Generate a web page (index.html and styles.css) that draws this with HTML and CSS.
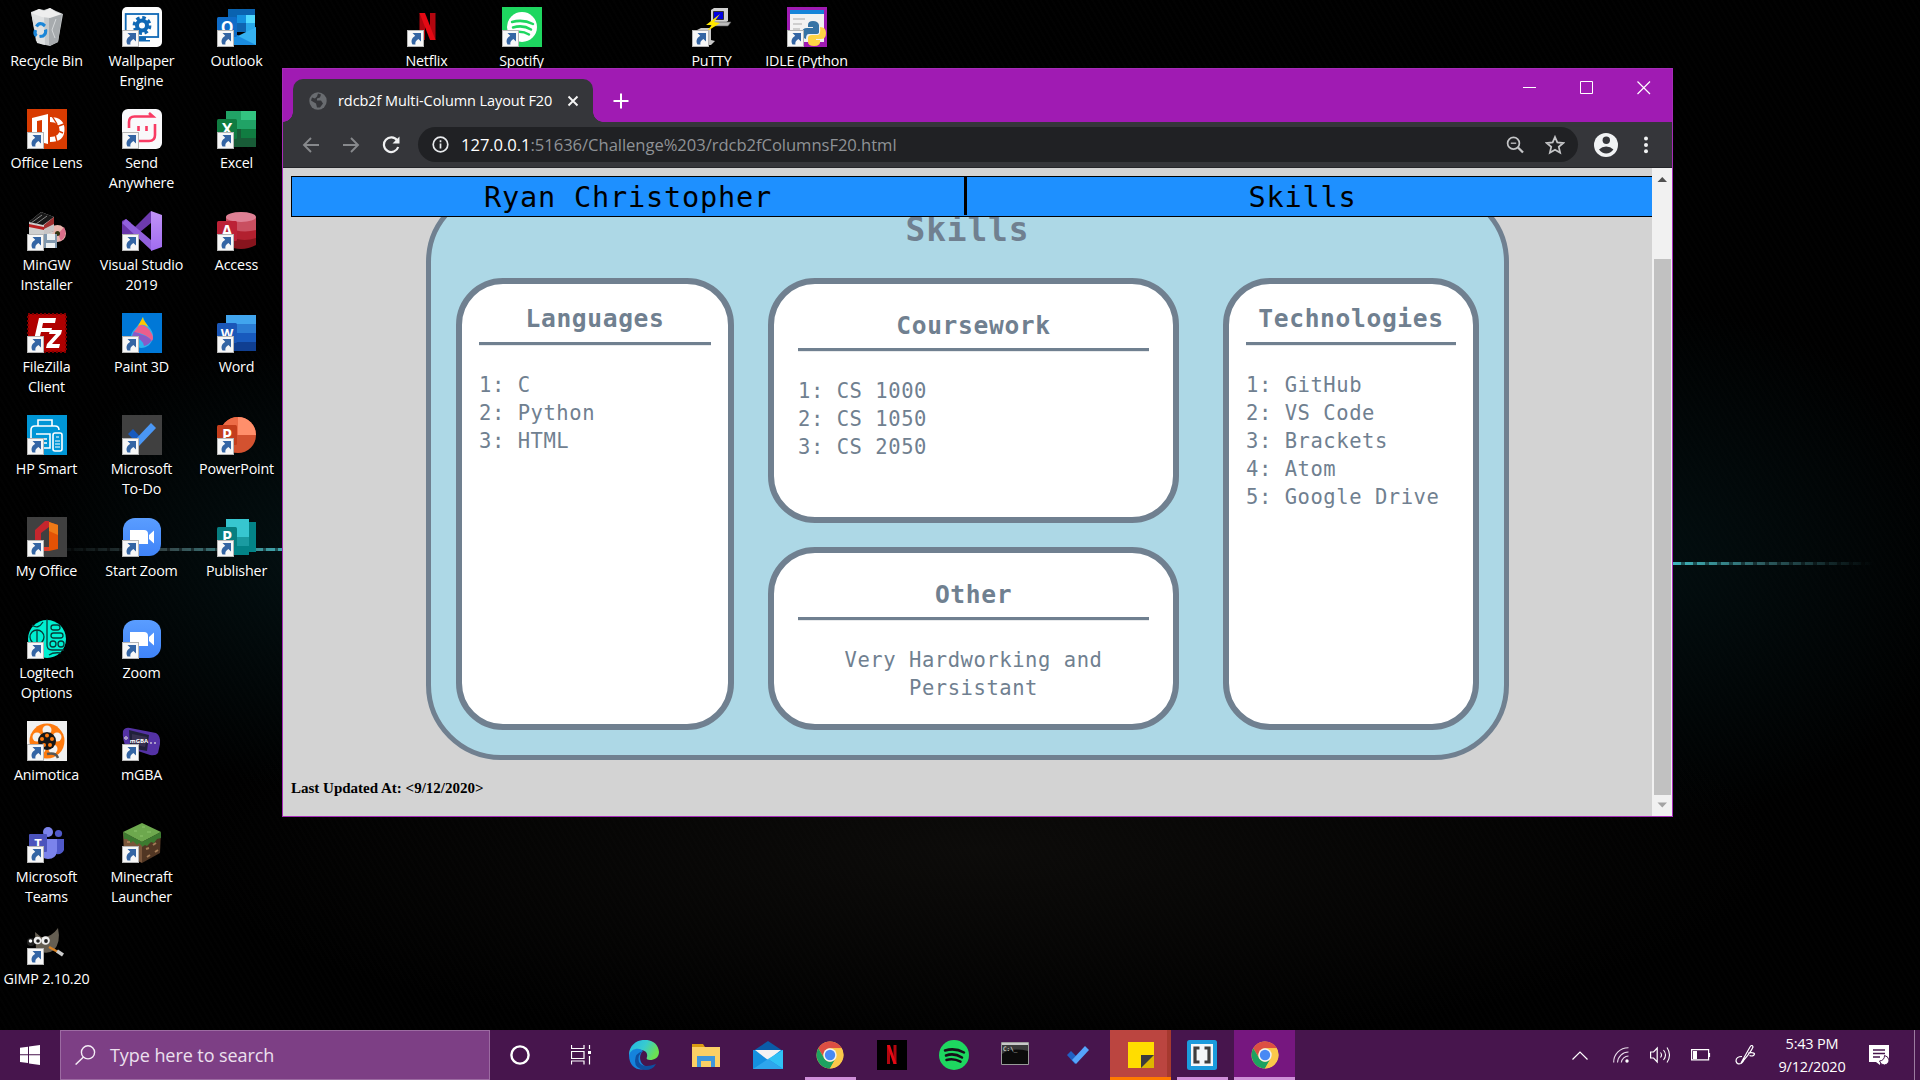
FILE: index.html
```html
<!DOCTYPE html>
<html lang="en">
<head>
<meta charset="utf-8">
<title>Desktop</title>
<link rel="stylesheet" href="styles.css">
</head>
<body>
<svg class="defs" width="0" height="0" aria-hidden="true">
  <defs>
    <symbol id="shortcut" viewBox="0 0 17 17">
      <rect x=".5" y=".5" width="16" height="16" fill="#f7f7f7" stroke="#b5b5b5"/>
      <path d="M5.500 3h8.500v8.500l-2.600-2.500C9 10.500 7.800 12.500 8.500 14.500H5.500C3.500 11 4.800 8 8.200 5.700z" fill="#3465a4"/>
    </symbol>
    <symbol id="chrome" viewBox="0 0 28 28">
      <circle cx="14" cy="14" r="13.500" fill="#fbc84a"/>
      <path d="M2.300 7.300A13.500 13.500 0 0 1 25.700 7.300H14a6.700 6.700 0 0 0-5.800 10z" fill="#dd4f43"/>
      <path d="M2.300 7.300L8.200 17.300A6.700 6.700 0 0 0 19.800 17.300L14 27.500A13.500 13.500 0 0 1 2.300 7.300z" fill="#1da260"/>
      <path d="M14 7.300H25.700A13.500 13.500 0 0 1 14 27.500l5.800-10.200A6.700 6.700 0 0 0 14 7.300z" fill="#fbc84a"/>
      <circle cx="14" cy="14" r="6.700" fill="#f1f1f1"/><circle cx="14" cy="14" r="5.200" fill="#4889f4"/>
    </symbol>
    <symbol id="zoomapp" viewBox="0 0 40 40">
      <linearGradient id="zg" x2="0" y2="1"><stop stop-color="#5a9dff"/><stop offset="1" stop-color="#3f83f8"/></linearGradient>
      <rect x="1" y="1" width="38" height="38" rx="12" fill="url(#zg)"/>
      <path d="M8 13h14q4 0 4 4v10H12q-4 0-4-4zM27 18l5-4.500v13L27 22z" fill="#fff"/>
    </symbol>
    <linearGradient id="edgeA" x1="0" y1="0" x2="1" y2=".4"><stop stop-color="#1fb5e8"/><stop offset=".55" stop-color="#38cbd0"/><stop offset="1" stop-color="#6be052"/></linearGradient>
    <linearGradient id="vs" x2="0" y2="1"><stop stop-color="#c193f7"/><stop offset="1" stop-color="#a06cf0"/></linearGradient>
  </defs>
</svg>

<main class="desktop">
  <div class="beam beam-left"></div>
  <div class="beam beam-right"></div>

  <section class="icons">
    <div class="app c1 r1">
      <svg viewBox="0 0 40 40"><path d="M4 5l8-3 5 1 6-2 6 3 7 3-5 28-8 4-9-2-5-3z" fill="#c6c9cb"/><path d="M4 5l13 4 1 29-8-2z" fill="#dfe1e2"/><path d="M22 9l13-2-4 28-9 4z" fill="#a7abae"/><path d="M4 6l8-4 5 2 6-3 6 4 6 2-12 4-8-1z" fill="#eee"/><path d="M29 12l-4 11 3 8M6 12l5 10" stroke="#d4d7d9" fill="none"/><path d="M9.500 19.500q2-4 6-2.500l2.500 2M18.500 22.500q1 4-2.500 6.500l-3.500 .5M9.500 29q-2.500-2-1-6" stroke="#1b86d8" stroke-width="3.200" fill="none"/></svg>
      <span>Recycle Bin</span></div>
    <div class="app c2 r1">
      <svg viewBox="0 0 40 40"><rect width="40" height="40" rx="5" fill="#fdfdfd"/><rect x="3.700" y="7" width="32.500" height="23" fill="none" stroke="#0f68b5" stroke-width="1.800"/><path d="M17 30h7v3h4v1.500H13V33h4z" fill="#0f68b5"/><circle cx="20" cy="18.500" r="5" fill="none" stroke="#0f68b5" stroke-width="4"/><circle cx="20" cy="18.500" r="7.800" fill="none" stroke="#0f68b5" stroke-width="3.200" stroke-dasharray="3.500 2.626"/></svg>
      <svg class="link"><use href="#shortcut"/></svg><span>Wallpaper<br>Engine</span></div>
    <div class="app c3 r1">
      <svg viewBox="0 0 40 40"><path d="M11 2h27v20H11z" fill="#0a63b0"/><path d="M20 8h9v8h-9z" fill="#1490df"/><path d="M29 8h9v8h-9z" fill="#50d9ff"/><path d="M20 16h9v9h-9z" fill="#0f64b0"/><path d="M29 16h9v9h-9z" fill="#28a8ea"/><path d="M9 38V24l14 5 16-9v18z" fill="#1a8ce0"/><path d="M39 20v18L21 29z" fill="#35b1f1"/><rect y="10" width="20" height="20" rx="1.500" fill="#0f6cc8"/><text x="10" y="26" class="glyph g17">O</text></svg>
      <svg class="link"><use href="#shortcut"/></svg><span>Outlook</span></div>

    <div class="app c1 r2">
      <svg viewBox="0 0 40 40"><path fill="#d83b01" d="M0 0h40v40H0z"/><path fill="#fff" d="M5 9l16-4v30L5 31z"/><path fill="#d83b01" d="M10 12l5-1v18l-5-1z"/><path d="M23 10.500q12 0 12 10t-12 10" fill="none" stroke="#fff" stroke-width="5"/><path d="M25 7l5 8M37 15l-8 3M36 24l-7-3M30 33l-2-8" stroke="#d83b01" stroke-width="1.400"/></svg>
      <svg class="link"><use href="#shortcut"/></svg><span>Office Lens</span></div>
    <div class="app c2 r2">
      <svg viewBox="0 0 40 40"><rect width="40" height="40" rx="6" fill="#f9f9fb"/><path d="M7 19v-6q0-5.500 5.500-5.500H31l-4-3.500M33 15v11q0 6-6 6H14q-6 0-7-5" stroke="#f83a63" stroke-width="2.600" fill="none"/><path d="M16.500 17v5M24.500 17v5" stroke="#f83a63" stroke-width="2.600"/></svg>
      <svg class="link"><use href="#shortcut"/></svg><span>Send<br>Anywhere</span></div>
    <div class="app c3 r2">
      <svg viewBox="0 0 40 40"><path d="M9 2h15v18H9z" fill="#21a366"/><path d="M24 2h15v9H24z" fill="#33c481"/><path d="M24 11h15v9H24z" fill="#21a366"/><path d="M24 20h15v9H24z" fill="#107c41"/><path d="M9 20h15v9h15v9H9z" fill="#185c37"/><rect y="10" width="20" height="20" rx="1.500" fill="#107c41"/><text x="10" y="26" class="glyph g17">X</text></svg>
      <svg class="link"><use href="#shortcut"/></svg><span>Excel</span></div>

    <div class="app c1 r3">
      <svg viewBox="0 0 40 40"><circle cx="30.500" cy="22.500" r="8.500" fill="#e9b5ac"/><path d="M31 23l6-7q4 8-3 14z" fill="#db6f8b"/><circle cx="30.500" cy="22.500" r="2.500" fill="#331"/><path d="M2 11L14 1l13 5v15L17 29 2 24z" fill="#cfcfcf"/><path d="M2 11L14 1l13 5-11 8z" fill="#181818"/><path d="M4 12L15 4M9 13L20 5" stroke="#888"/><path d="M17 14l10-8v14l-10 3z" fill="#a03030"/><path d="M17 18l10-5v7l-10 4z" fill="#c8c4c4"/><path d="M2 13l15 3v3L2 16z" fill="#b81e20"/><path d="M17 23h13v14H16z" fill="#8198ae"/><path d="M20 23h8v6h-8zM19 32h9v5h-9z" fill="#ecf0f2"/></svg>
      <svg class="link"><use href="#shortcut"/></svg><span>MinGW<br>Installer</span></div>
    <div class="app c2 r3">
      <svg viewBox="0 0 40 40"><path d="M0 10l4-2 5 4v16L0 32z" fill="#6935a9"/><path d="M3 9L29 0v9L9 31z" fill="#000" opacity="0"/><path d="M29 0v12L6 31l-5-3z" fill="#6d3aaf"/><path d="M4 8l25 21v10L0 12z" fill="#9160dc"/><path d="M29 0l11 4v32l-11 4z" fill="url(#vs)"/></svg>
      <svg class="link"><use href="#shortcut"/></svg><span>Visual Studio<br>2019</span></div>
    <div class="app c3 r3">
      <svg viewBox="0 0 40 40"><path d="M9 6v28q15 8 30 0V6z" fill="#87141d"/><path d="M9 6v18q15 8 30 3V6z" fill="#b2202f"/><path d="M9 6v10q15 7 30 3V6z" fill="#c94f60"/><ellipse cx="24" cy="6" rx="15" ry="5" fill="#df8094"/><rect y="10" width="20" height="20" rx="1.500" fill="#bc2136"/><text x="10" y="26" class="glyph g17">A</text></svg>
      <svg class="link"><use href="#shortcut"/></svg><span>Access</span></div>

    <div class="app c1 r4">
      <svg viewBox="0 0 40 40"><path fill="#b00000" d="M1 1h38v38H1z"/><rect x="1" y="1" width="38" height="38" fill="none" stroke="#7d0000" stroke-width="2" stroke-dasharray="2 2"/><path d="M12 5h17l-1 5H16l-1 5h10l-1 4H14l-3 12H6zM23 17h12l-1 4-9 10h8l-1 4H19l1-4 9-10h-7z" fill="#fff"/></svg>
      <svg class="link"><use href="#shortcut"/></svg><span>FileZilla<br>Client</span></div>
    <div class="app c2 r4">
      <svg viewBox="0 0 40 40"><path fill="#0078d7" d="M0 0h40v40H0z"/><path d="M21 4c2 8 11 12 10 20-1 7-6 11-12 11-6-1-10-6-10-12 1-7 9-10 12-19z" fill="#2bb3ef"/><path d="M12 18q5 3 12 5l6 4q-3 5-8 6-1-7-12-10z" fill="#885ac7"/><path d="M17 12q8-1 13 9 2 4 0 7-5-7-18-9z" fill="#eb5e8c"/><path d="M21 4c0 4 4 6 5 10q-5-4-10-1z" fill="#ffc600"/></svg>
      <svg class="link"><use href="#shortcut"/></svg><span>Paint 3D</span></div>
    <div class="app c3 r4">
      <svg viewBox="0 0 40 40"><path d="M9 2h30v9H9z" fill="#41a5ee"/><path d="M9 11h30v9H9z" fill="#2b7cd3"/><path d="M9 20h30v9H9z" fill="#185abd"/><path d="M9 29h30v9H9z" fill="#103f91"/><rect y="10" width="20" height="20" rx="1.500" fill="#1b57b8"/><text x="10" y="25" class="glyph g14">W</text></svg>
      <svg class="link"><use href="#shortcut"/></svg><span>Word</span></div>

    <div class="app c1 r5">
      <svg viewBox="0 0 40 40"><path fill="#0096d6" d="M0 0h40v40H0z"/><path d="M4 27V15q0-4 4-4h20q4 0 4 4M11 11V5h14v6M9 19h14v14H9M12 24h8M12 28h8" fill="none" stroke="#fff" stroke-width="1.600"/><rect x="26" y="18" width="9" height="18" rx="2" fill="#0096d6" stroke="#fff" stroke-width="1.600"/><path d="M29 22h3M28 26h5M28 29h5M28 32h5" stroke="#fff"/></svg>
      <svg class="link"><use href="#shortcut"/></svg><span>HP Smart</span></div>
    <div class="app c2 r5">
      <svg viewBox="0 0 40 40"><path fill="#404040" d="M0 0h40v40H0z"/><path d="M6 19l5-5 10 11-4 5z" fill="#185abd"/><path d="M29 8l5 5-17 18-5-5z" fill="#4a97f5"/></svg>
      <svg class="link"><use href="#shortcut"/></svg><span>Microsoft<br>To-Do</span></div>
    <div class="app c3 r5">
      <svg viewBox="0 0 40 40"><circle cx="21" cy="20" r="18" fill="#d35230"/><path d="M21 2a18 18 0 0 0-18 18h18z" fill="#ed6c47"/><path d="M21 2a18 18 0 0 1 18 18H21z" fill="#ff8f6b"/><rect y="10" width="20" height="20" rx="1.500" fill="#c43e1c"/><text x="10" y="26" class="glyph g17">P</text></svg>
      <svg class="link"><use href="#shortcut"/></svg><span>PowerPoint</span></div>

    <div class="app c1 r6">
      <svg viewBox="0 0 40 40"><path fill="#404040" d="M0 0h40v40H0z"/><path d="M8 28V13l10-9h4v6l-8 6v14h8v4h-4z" fill="#c5262d"/><path d="M22 5l9 3v24l-9 2z" fill="#e35205"/><path d="M22 5l9 3v10l-9-4z" fill="#ee7a17"/><path d="M8 28l6-3v5h8v4h-5z" fill="#e03a2b"/></svg>
      <svg class="link"><use href="#shortcut"/></svg><span>My Office</span></div>
    <div class="app c2 r6"><svg viewBox="0 0 40 40"><use href="#zoomapp"/></svg>
      <svg class="link"><use href="#shortcut"/></svg><span>Start Zoom</span></div>
    <div class="app c3 r6">
      <svg viewBox="0 0 40 40"><path d="M24 5h15v30H24z" fill="#038387"/><path d="M9 2h23v18H9z" fill="#37c6d0"/><path d="M9 20h23v9H9z" fill="#1a9ba1"/><path d="M9 29h23v9H9z" fill="#038387"/><rect y="10" width="20" height="20" rx="1.500" fill="#077e80"/><text x="10" y="26" class="glyph g17">P</text></svg>
      <svg class="link"><use href="#shortcut"/></svg><span>Publisher</span></div>

    <div class="app c1 r7">
      <svg viewBox="0 0 40 40"><circle cx="20" cy="20" r="19" fill="#00efd1"/><g fill="none" stroke="#073b38" stroke-width="1.300"><circle cx="10" cy="18" r="7"/><path d="M10 11v13M20 0v26q0 5 5 5h12M5 6q6 5 11-3M22 36q4-3 12-2"/><rect x="24" y="6" width="9" height="5" rx="2.500"/><rect x="24" y="14" width="12" height="5" rx="2.500"/><circle cx="26" cy="25" r="3"/><circle cx="34" cy="25" r="3"/></g></svg>
      <svg class="link"><use href="#shortcut"/></svg><span>Logitech<br>Options</span></div>
    <div class="app c2 r7"><svg viewBox="0 0 40 40"><use href="#zoomapp"/></svg>
      <svg class="link"><use href="#shortcut"/></svg><span>Zoom</span></div>

    <div class="app c1 r8">
      <svg viewBox="0 0 40 40"><path fill="#f1f1f1" d="M0 0h40v40H0z"/><circle cx="20" cy="20" r="17.500" fill="#ff7b0f"/><g fill="#f1f1f1"><circle cx="20" cy="9" r="4.500"/><circle cx="10" cy="16" r="4.500"/><circle cx="30" cy="16" r="4.500"/><circle cx="26" cy="28" r="4.500"/><circle cx="14" cy="28" r="4.500"/></g><circle cx="20" cy="20" r="9" fill="#171717"/><g fill="#ff7b0f"><circle cx="20" cy="14.500" r="2"/><circle cx="15" cy="18" r="2"/><circle cx="25" cy="18" r="2"/><circle cx="17" cy="24" r="2"/><circle cx="23" cy="24" r="2"/></g><path d="M20 33q9-2 11 4" stroke="#555" stroke-width="2.500" fill="none"/></svg>
      <svg class="link"><use href="#shortcut"/></svg><span>Animotica</span></div>
    <div class="app c2 r8">
      <svg viewBox="0 0 40 40"><path d="M1 10q2-4 7-3l26 5q5 3 4 11l-2 9q-2 3-8 2L4 26q-4-8-3-16z" fill="#5432a5"/><path d="M7 9l20 5-2 16L8 27z" fill="#20203a"/><path d="M10 13l15 3-2 10-13-3z" fill="#373050"/><text x="17" y="22" class="glyph g5">mGBA</text><path d="M2 17h4M4 15v4M28 22h2M32 22h2" stroke="#a99ac9" stroke-width="1.800"/></svg>
      <svg class="link"><use href="#shortcut"/></svg><span>mGBA</span></div>

    <div class="app c1 r9">
      <svg viewBox="0 0 40 40"><circle cx="21" cy="9" r="5" fill="#7b83eb"/><circle cx="31.500" cy="10.500" r="3.600" fill="#5059c9"/><path d="M27 16h10v11q-2 5-8 4z" fill="#5059c9"/><path d="M14 16h16v12q-1 8-9 8-7 0-8-7z" fill="#7b83eb"/><rect x="2" y="11" width="18" height="18" rx="1" fill="#4b53bc"/><text x="11" y="25" class="glyph g14">T</text></svg>
      <svg class="link"><use href="#shortcut"/></svg><span>Microsoft<br>Teams</span></div>
    <div class="app c2 r9">
      <svg viewBox="0 0 40 40"><path d="M1 9l19 10v21L2 31z" fill="#79553a"/><path d="M39 9L20 19v21l18-10z" fill="#513623"/><path d="M20 0l19 9-19 10L1 9z" fill="#6da84e"/><path d="M1 9l19 10v4l-3-3-2 2-4-4-2 2-4-4-3 0zM39 9L20 19v5l3-2 2 1 4-4 3 1 3-4 4-1z" fill="#3c7a30"/><path d="M5 19h3M11 25h4M8 30h3M24 26l3-1M31 22l3-2M25 34l3-2M33 29l3-2" stroke="#a27a55" stroke-width="2"/><path d="M12 8h3M20 4h3M25 9h4M18 13h3" stroke="#8cc46a"/></svg>
      <svg class="link"><use href="#shortcut"/></svg><span>Minecraft<br>Launcher</span></div>

    <div class="app c1 r10">
      <svg viewBox="0 0 40 40"><g transform="translate(0 3)"><path d="M8 4l6 5q10 1 17-9 3 14-4 22-8 6-18-1z" fill="#655e52"/><circle cx="4" cy="14" r="4" fill="#222"/><circle cx="3.500" cy="13" r="1.800" fill="#fff"/><circle cx="10.500" cy="12.500" r="3.800" fill="#eee"/><circle cx="18.500" cy="12.500" r="4.300" fill="#eee"/><circle cx="11" cy="13" r="1.800" fill="#222"/><circle cx="19" cy="13" r="1.900" fill="#222"/><path d="M22 19l9 5" stroke="#d88223" stroke-width="2.500"/><path d="M30 23l6 4" stroke="#ccc" stroke-width="3.500"/></g></svg>
      <svg class="link"><use href="#shortcut"/></svg><span>GIMP 2.10.20</span></div>

    <div class="app c5 r1">
      <svg viewBox="0 0 40 40"><path d="M12.500 6h5.500v27h-5.500zM23 6h5.500v27H23z" fill="#b1060f"/><path d="M12.500 6H18l10.500 27H23z" fill="#e50914"/></svg>
      <svg class="link"><use href="#shortcut"/></svg><span>Netflix</span></div>
    <div class="app c6 r1">
      <svg viewBox="0 0 40 40"><path fill="#1ed760" d="M0 0h40v40H0z"/><circle cx="20" cy="20" r="15" fill="#fff"/><path d="M10 15q11-3 21 2M11 20.500q10-3 18 2M12 25.500q8-2 15 2" stroke="#1ed760" stroke-width="2.500" fill="none" stroke-linecap="round"/></svg>
      <svg class="link"><use href="#shortcut"/></svg><span>Spotify</span></div>
    <div class="app c8 r1">
      <svg viewBox="0 0 40 40"><path d="M19 3l3-2h14v13l-3 2H19z" fill="#d0d0d0"/><path fill="#0000e0" stroke="#333" d="M21.500 4.500h10v8h-10z"/><path d="M19 18l3-3h17l-3 4H19z" fill="#bbb" stroke="#555" stroke-width=".6"/><path d="M5 23l4-2h10v12l4 1-4 4h-9z" fill="#c8c8c8"/><path d="M28 7L14 18l6 0-6 7 14-9-6-1z" fill="#ffe800"/></svg>
      <svg class="link"><use href="#shortcut"/></svg><span>PuTTY</span></div>
    <div class="app c9 r1">
      <svg viewBox="0 0 40 40"><path fill="#a01bb3" d="M0 0h40v40H0z"/><path fill="#f2f2f2" d="M3 3h34v32H3z"/><path fill="#1685d9" d="M3 3h34v4H3z"/><path d="M6 12h12M6 17h9M6 22h7" stroke="#aaa"/><path d="M21 18q0-4 5-4t6 4v7q0 2-3 2h-7q-3 0-3 5-4-1-4-6t5-5h6v-1h-5z" fill="#3673a5"/><path d="M33 20q6 0 6 6t-5 6h-5v1h4q1 6-6 6-6 0-6-4v-4q0-3 4-3h6q3-1 2-8z" fill="#ffd445"/></svg>
      <svg class="link"><use href="#shortcut"/></svg><span>IDLE (Python</span></div>
  </section>

  <section class="window">
    <header class="titlebar">
      <div class="tab">
        <svg class="globe" viewBox="0 0 18 18"><circle cx="9" cy="9" r="8.700" fill="#696c70"/><path d="M9 1.500l3 1-1 3-3 1 0 2 4 0 2 3-3 4H8l-1-4-5-3 1-3 3 1 2-2z" fill="#35363a"/></svg>
        <span class="tab-title">rdcb2f Multi-Column Layout F20</span>
        <svg class="tab-x" viewBox="0 0 12 12"><path d="M1.500 1.500l9 9M10.500 1.500l-9 9" stroke="#f5f5f5" stroke-width="1.900"/></svg>
      </div>
      <svg class="newtab" viewBox="0 0 16 16"><path d="M8 .5v15M.5 8h15" stroke="#fff" stroke-width="2"/></svg>
      <div class="controls">
        <svg viewBox="0 0 14 14"><path d="M0 6.500h13" stroke="#fff"/></svg>
        <svg viewBox="0 0 14 14"><path d="M.5 .5h12v12H.5z" fill="none" stroke="#fff"/></svg>
        <svg viewBox="0 0 14 14"><path d="M.5 .5l12.500 12.500M13 .5L.5 13" stroke="#fff" stroke-width="1.200"/></svg>
      </div>
    </header>
    <div class="toolbar">
      <svg class="nav-i" viewBox="0 0 18 18"><path d="M17 9H2M9 2L2 9l7 7" fill="none" stroke="#87898c" stroke-width="1.900"/></svg>
      <svg class="nav-i" viewBox="0 0 18 18"><path d="M1 9h15M9 2l7 7-7 7" fill="none" stroke="#87898c" stroke-width="1.900"/></svg>
      <svg class="nav-i" viewBox="0 0 18 18"><path d="M15.200 4.500A7.300 7.300 0 1 0 16.200 11" fill="none" stroke="#f0f1f2" stroke-width="2.200"/><path d="M17.500 .5v7h-7z" fill="#f0f1f2"/></svg>
      <div class="omnibox">
        <svg class="info" viewBox="0 0 17 17"><circle cx="8.500" cy="8.500" r="7.300" fill="none" stroke="#e8eaed" stroke-width="1.700"/><path d="M8.500 7.500v5M8.500 4.300v1.900" stroke="#e8eaed" stroke-width="1.700"/></svg>
        <span class="url"><b>127.0.0.1</b>:51636/Challenge%203/rdcb2fColumnsF20.html</span>
        <svg class="lens" viewBox="0 0 18 18"><circle cx="7.500" cy="7.200" r="5.900" fill="none" stroke="#c4c5c7" stroke-width="1.700"/><path d="M12 11.500l5 5" stroke="#c4c5c7" stroke-width="2.300"/><path d="M4.800 7.200h5.400" stroke="#c4c5c7" stroke-width="1.300"/></svg>
        <svg class="star" viewBox="0 0 18 18"><path d="M9 1.800l2.100 4.900 5.300.5-4 3.500 1.200 5.200L9 13.200l-4.600 2.700 1.200-5.200-4-3.500 5.300-.5z" fill="none" stroke="#c4c5c7" stroke-width="1.600"/></svg>
      </div>
      <svg class="avatar" viewBox="0 0 24 24"><circle cx="12" cy="12" r="12" fill="#f1f3f4"/><circle cx="12.300" cy="7.200" r="3.700" fill="#35363a"/><path d="M5 16.500q3-3 7.200-3t7.200 3q-3 4-7.200 4t-7.200-4z" fill="#35363a"/></svg>
      <svg class="dots" viewBox="0 0 4 18"><circle cx="2" cy="2.500" r="2" fill="#f1f3f4"/><circle cx="2" cy="9" r="2" fill="#f1f3f4"/><circle cx="2" cy="15.300" r="2" fill="#f1f3f4"/></svg>
    </div>
    <div class="viewport">
      <div class="page">
        <nav class="nav"><span class="nav-cell first">Ryan Christopher</span><span class="nav-cell second">Skills</span></nav>
        <article class="panel">
          <h1>Skills</h1>
          <div class="columns">
            <section class="card lang"><h2>Languages</h2><hr><p>1: C<br>2: Python<br>3: HTML</p></section>
            <div class="stack">
              <section class="card course"><h2>Coursework</h2><hr><p>1: CS 1000<br>2: CS 1050<br>3: CS 2050</p></section>
              <section class="card other"><h2>Other</h2><hr><p>Very Hardworking and<br>Persistant</p></section>
            </div>
            <section class="card tech"><h2>Technologies</h2><hr><p>1: GitHub<br>2: VS Code<br>3: Brackets<br>4: Atom<br>5: Google Drive</p></section>
          </div>
        </article>
        <footer class="updated">Last Updated At: &lt;9/12/2020&gt;</footer>
      </div>
      <div class="scrollbar">
        <svg class="arrow" viewBox="0 0 20 21"><path d="M5.500 14h9.500L10.300 9z" fill="#505050"/></svg>
        <div class="thumb"></div>
        <svg class="arrow" viewBox="0 0 20 21"><path d="M5.500 7.500h9.500l-4.700 5z" fill="#a3a3a3"/></svg>
      </div>
    </div>
  </section>
</main>

<footer class="taskbar">
  <div class="start"><svg width="20" height="20" viewBox="0 0 20 20"><path d="M0 2.800L8 1.700v7.600H0zM9 1.500L20 0v9.300H9zM0 10.300h8V18l-8-1.100zM9 10.300h11V20L9 18.400z" fill="#fff"/></svg></div>
  <div class="search"><svg width="21" height="20" viewBox="0 0 21 20"><circle cx="13" cy="7.300" r="6.600" fill="none" stroke="#f5edf6" stroke-width="1.400"/><path d="M8.500 12L.6 19.600" stroke="#f5edf6" stroke-width="1.400"/></svg><span>Type here to search</span></div>
  <div class="task"><svg width="20" height="20" viewBox="0 0 20 20"><circle cx="10" cy="10" r="8.600" fill="none" stroke="#fff" stroke-width="2.400"/></svg></div>
  <div class="task"><svg class="tv" width="20" height="20" viewBox="0 0 20 20"><path d="M.5 0v3.500h12.500V0M.5 19.500V16h12.500v3.500M.5 6.500h12.500v7H.5zM18.500 0v4M18.500 11v8.500" fill="none" stroke="#fff" stroke-width="1.200"/><path d="M17 6h3v3h-3z" fill="#fff"/></svg></div>
  <div class="task"><svg width="30" height="30" viewBox="0 0 30 30"><path d="M0 14C1-4 29-5 30 12c0 6-5 8-9 8-3 0-4-1-3-3 1-4-2-7-6-7C6 10 1 13 0 17z" fill="url(#edgeA)"/><path d="M0 15c2-7 11-8 14-4-5 4-4 15 6 16-7 5-20 3-20-12z" fill="#1583dc"/><path d="M14 11q-6 4-4 11 4 7 17 2-3 6-11 6-10-1-10-9 0-8 8-10z" fill="#0e4fa0"/></svg></div>
  <div class="task"><svg width="28" height="24" viewBox="0 0 28 24"><path d="M0 1h11l2 3H0z" fill="#d99b12"/><path d="M0 4h28v20H0z" fill="#fbd065"/><path d="M5 24V13h18v11h-4v-6H9v6z" fill="#3f97dc"/></svg></div>
  <div class="task"><svg width="30" height="28" viewBox="0 0 30 28"><path d="M0 10L15 0l15 10z" fill="#0a5ba8"/><path d="M0 9h30v19H0z" fill="#1590e0"/><path d="M2 9h26L15 19z" fill="#f3f3f3"/><path d="M30 9v19L15 18z" fill="#30c1f5"/><path d="M0 28l15-10 15 10z" fill="#2ea5ec"/></svg></div>
  <div class="task open"><svg width="28" height="28"><use href="#chrome"/></svg></div>
  <div class="task"><svg width="30" height="30" viewBox="0 0 30 30"><path d="M0 0h30v30H0z"/><path d="M10 5h3v19h-3zM16.500 5h3v19h-3z" fill="#b1060f"/><path d="M10 5h3l6.500 19h-3z" fill="#e50914"/></svg></div>
  <div class="task"><svg width="30" height="30" viewBox="0 0 30 30"><circle cx="15" cy="15" r="15" fill="#1ed760"/><path d="M6 10.500q10-3 19 2M7 15.500q8-3 16 2M7.500 20q7-2 14 1.700" fill="none" stroke="#160f18" stroke-width="2.500" stroke-linecap="round"/></svg></div>
  <div class="task"><svg class="cmd" width="28" height="23" viewBox="0 0 28 23"><path d="M.5 .5h27v22H.5z" fill="#0b0b0b" stroke="#9a9a9a"/><path d="M1 1h26v2H1z" fill="#c8c8c8"/><path d="M1 12Q10 5 27 9V3H1z" fill="#3b3b3b"/><text x="2" y="9" class="prompt">C:\_</text></svg></div>
  <div class="task"><svg width="24" height="20" viewBox="0 0 24 20"><path d="M1 10l4-4 8 8-4 5z" fill="#2160c4"/><path d="M19 1l4 4-13 14-4-4z" fill="#55a4fb"/></svg></div>
  <div class="task sticky"><svg width="26" height="26" viewBox="0 0 26 26"><path d="M0 0h26v14L14 26H0z" fill="#fd0"/><path d="M26 13v13H13V13z" fill="#ddb700"/><path d="M13 13h13L13 26z" fill="#3c3c3c"/></svg></div>
  <div class="task open"><svg width="30" height="30" viewBox="0 0 30 30"><rect width="30" height="30" rx="2.500" fill="#1b9bdd"/><path d="M4 4h22v22H4z" fill="#f3f7f9"/><path d="M12.500 8H8v14h4.500M17.500 8H22v14h-4.500" fill="none" stroke="#3e3e3e" stroke-width="3.200"/></svg></div>
  <div class="task current"><svg width="28" height="28"><use href="#chrome"/></svg></div>
  <div class="tray">
    <div class="t40"><svg width="16" height="9" viewBox="0 0 16 9"><path d="M.5 8.500L8 1l7.500 7.500" fill="none" stroke="#fff" stroke-width="1.200"/></svg></div>
    <div class="t42"><svg width="16" height="16" viewBox="0 0 16 16"><path d="M.7 15.500A14.500 14.500 0 0 1 15.500 .7M4.500 15.500A11 11 0 0 1 15.500 5M8.300 15.500A7.500 7.500 0 0 1 15.500 9" fill="none" stroke="#e8dcea" stroke-width="1.100"/><circle cx="14" cy="14" r="1.700" fill="#fff"/></svg></div>
    <div class="t37"><svg width="21" height="18" viewBox="0 0 21 18"><path d="M.6 6h3l3.600-4v14L3.600 12h-3z" fill="none" stroke="#fff" stroke-width="1.200"/><path d="M10.500 6.500q2 2.500 0 5M13.500 4q4 5 0 10M17 1.500q5 7.500 0 15" fill="none" stroke="#fff" stroke-width="1.100"/></svg></div>
    <div class="t43"><svg width="20" height="12" viewBox="0 0 20 12"><path d="M.6 .6h17v10.300H.6zM18.500 4v4" fill="none" stroke="#fff" stroke-width="1.200"/><path d="M2 2h4v8H2z" fill="#fff"/></svg></div>
    <div class="t46"><svg width="21" height="20" viewBox="0 0 21 20"><path d="M7 11.500q-6 0-6 4.500 1 4 5 2.500 3-2 3-5M13 8q6-1 6.500 1-1 3-5 1.500M6 18L15 2q2-3 3 0-2 5-10 14z" fill="none" stroke="#fff" stroke-width="1.200"/></svg></div>
    <div class="clock"><span>5:43 PM</span><span>9/12/2020</span></div>
    <div class="t46"><svg width="21" height="20" viewBox="0 0 21 20"><path d="M0 0h20v16h-9v4l-4-3H0z" fill="#fff"/><path d="M4 5h12M4 8.500h12M4 12h7" stroke="#47154d" stroke-width="1.300"/><path d="M15.500 10.500q0 5-5 5.500 1 4 5 4 4.500-1 4.500-5-1-4-4.500-4.500z" fill="#fff" stroke="#47154d"/></svg></div>
    <div class="peek"></div>
  </div>
</footer>
</body>
</html>
```
FILE: styles.css
```css
* { box-sizing: border-box; }
body {
  margin: 0;
  width: 1920px;
  height: 1080px;
  overflow: hidden;
  display: flex;
  flex-direction: column;
  background: #000;
  font-family: "Open Sans", "Noto Sans", sans-serif;
}
svg { display: block; flex: none; }
.defs { position: absolute; }

.desktop {
  position: relative;
  height: 1030px;
  background:
    radial-gradient(ellipse 330px 260px at 1640px 563px, rgba(6, 32, 36, .45), transparent),
    radial-gradient(ellipse 300px 230px at 330px 560px, rgba(6, 32, 36, .5), transparent),
    radial-gradient(ellipse 800px 200px at 980px 850px, rgba(24, 22, 19, .5), transparent),
    repeating-linear-gradient(60deg, #020202 0 2px, #000 2px 5px);
}
.beam { position: absolute; height: 3px; }
.beam-left {
  left: 50px;
  top: 548px;
  width: 232px;
  background:
    repeating-linear-gradient(90deg, transparent 0 9px, rgba(0, 0, 0, .5) 9px 12px),
    linear-gradient(90deg, transparent, #344749 50%, #3fa6ad);
}
.beam-right {
  left: 1673px;
  top: 562px;
  width: 200px;
  background:
    repeating-linear-gradient(90deg, transparent 0 8px, rgba(0, 0, 0, .5) 8px 12px),
    linear-gradient(90deg, #3fb6bd, #2d5c60 45%, transparent);
}

/* desktop icons */
.icons {
  display: grid;
  grid-template-columns: repeat(9, 95px);
  grid-auto-rows: 102px;
}
.app {
  position: relative;
  display: flex;
  flex-direction: column;
  align-items: center;
  padding-top: 7px;
}
.app > svg { width: 40px; height: 40px; }
.app > .link { position: absolute; left: 27px; top: 30px; width: 17px; height: 17px; }
.app > span {
  margin-top: 4px;
  margin-right: 2px;
  color: #fff;
  font-size: 14.3px;
  line-height: 20px;
  letter-spacing: -.18px;
  text-align: center;
  white-space: nowrap;
  text-shadow: 0 1px 2px #000;
}
.app > svg:first-child { margin-right: 1px; }
.c1 { grid-column: 1; } .c2 { grid-column: 2; } .c3 { grid-column: 3; }
.c5 { grid-column: 5; } .c6 { grid-column: 6; } .c8 { grid-column: 8; } .c9 { grid-column: 9; }
.r1 { grid-row: 1; } .r2 { grid-row: 2; } .r3 { grid-row: 3; } .r4 { grid-row: 4; } .r5 { grid-row: 5; }
.r6 { grid-row: 6; } .r7 { grid-row: 7; } .r8 { grid-row: 8; } .r9 { grid-row: 9; } .r10 { grid-row: 10; }
.glyph { fill: #fff; font-weight: 700; text-anchor: middle; }
.g17 { font-size: 16px; } .g14 { font-size: 13px; } .g5 { font-size: 6px; }

/* browser window */
.window {
  position: absolute;
  left: 282px;
  top: 68px;
  width: 1391px;
  height: 749px;
  display: flex;
  flex-direction: column;
  border: 1px solid #a62bb8;
}
.titlebar { display: flex; height: 53px; background: #a01bb3; padding-left: 10px; }
.tab {
  position: relative;
  display: flex;
  align-items: center;
  width: 300px;
  margin-top: 10px;
  padding-left: 16px;
  background: #35363a;
  border-radius: 10px 10px 0 0;
}
.tab::before, .tab::after {
  content: "";
  position: absolute;
  bottom: 0;
  width: 10px;
  height: 10px;
}
.tab::before { left: -10px; background: radial-gradient(circle at 0 0, transparent 9.5px, #35363a 10px); }
.tab::after { right: -10px; background: radial-gradient(circle at 100% 0, transparent 9.5px, #35363a 10px); }
.globe { width: 18px; height: 18px; }
.tab-title { width: 215px; margin-left: 11px; color: #fff; font-size: 14.5px; letter-spacing: -.08px; white-space: nowrap; }
.tab-x { width: 12px; height: 12px; margin-left: 14px; }
.newtab { width: 16px; height: 16px; margin: 24px 0 0 20px; }
.controls { display: flex; gap: 43px; margin: 12px 21px 0 auto; }
.controls svg { width: 14px; height: 14px; }
.toolbar { display: flex; align-items: center; height: 46px; padding-left: 19px; background: #35363a; border-bottom: 1px solid #242529; }
.nav-i { width: 18px; height: 18px; margin-right: 22px; }
.omnibox { display: flex; align-items: center; width: 1160px; height: 35px; margin-left: -4px; padding: 0 14px; border-radius: 18px; background: #202124; }
.info { width: 17px; height: 17px; }
.url { margin-left: 12px; color: #8f9296; font-size: 16.6px; letter-spacing: -.05px; white-space: nowrap; }
.url b { color: #fff; font-weight: 400; }
.lens { width: 18px; height: 18px; margin-left: auto; }
.star { width: 20px; height: 20px; margin-left: 21px; margin-right: -1px; }
.avatar { width: 24px; height: 24px; margin-left: 16px; }
.dots { width: 4px; height: 18px; margin-left: 26px; }

.viewport { display: flex; flex: 1; min-height: 0; }
.page { width: 1369px; padding: 8px 0 0 8px; overflow: hidden; background: #d3d3d3; }
.nav {
  position: relative;
  z-index: 2;
  display: flex;
  height: 41px;
  border: 1px solid #000;
  border-right: 0;
  background: #1e90ff;
  font: 28.600px/37px "DejaVu Sans Mono", monospace;
  letter-spacing: .78px;
  text-align: center;
}
.nav-cell { height: 38px; padding-top: 2px; }
.first { width: 675px; border-right: 3px solid #000; }
.second { flex: 1; padding-right: 14px; }
.panel {
  width: 1083px;
  height: 573px;
  margin: -30px 0 0 135px;
  padding: 0 25px;
  border: 5px solid #708090;
  border-radius: 75px;
  background: #add8e6;
  color: #708090;
  font: 20.500px/28px "DejaVu Sans Mono", monospace;
  letter-spacing: .55px;
}
h1 { height: 86px; margin: 0; font-size: 32.800px; line-height: 77px; letter-spacing: .88px; text-align: center; }
.columns { display: flex; height: 452px; }
.card { padding: 20px 17px 0; border: 6px solid #708090; border-radius: 47px; background: #fff; }
.card h2 { margin: 0; font-size: 24.600px; line-height: 29px; letter-spacing: .64px; text-align: center; white-space: nowrap; }
.card hr { height: 4px; margin: 9px 0 25px; border: 0; background: #708090; border-bottom: 1px solid #e8eaec; }
.card p { margin: 0; white-space: nowrap; }
.lang { width: 278px; }
.stack { display: flex; flex-direction: column; gap: 24px; width: 411px; margin: 0 44px 0 34px; }
.course, .other { padding: 27px 24px 0; }
.course hr, .other hr { margin-top: 8px; }
.course { height: 245px; }
.other { height: 183px; }
.other p { text-align: center; }
.tech { width: 256px; }
.updated { margin-top: 18px; font: bold 15px/20px "Liberation Serif", serif; }

.scrollbar { display: flex; flex-direction: column; width: 20px; background: #f1f1f1; }
.arrow { width: 20px; height: 21px; }
.thumb { flex: 1; margin: 70px 1px 0 2px; background: #c1c1c1; }

/* taskbar */
.taskbar { display: flex; height: 50px; background: #47154d; color: #fff; }
.start { display: grid; place-items: center; width: 60px; }
.search { display: flex; align-items: center; width: 430px; margin-right: -1px; padding-left: 14px; border: 1px solid #9c6ba2; background: #7d3f85; }
.search span { margin-left: 14px; color: #ece0ee; font-size: 18px; letter-spacing: -.07px; }
.task { position: relative; display: grid; place-items: center; width: 62px; }
.tv { margin-right: 3px; }
.cmd { margin: -3px 2px 0 0; }
.open::after, .current::after, .sticky::after { content: ""; position: absolute; left: 6px; right: 5px; bottom: 0; height: 3px; background: #cf8fd9; }
.current { background: #76177f; width: 61px; margin-left: 1px; }
.current::after { left: 0; right: 0; }
.sticky { width: 61px; margin-left: 1px; background: linear-gradient(90deg, #bb4540 57px, #a6392f 57px); }
.sticky::after { left: 0; right: 0; background: #ff7a00; }
.prompt { fill: #eee; font: 6px "DejaVu Sans Mono", monospace; }
.tray { display: flex; margin-left: auto; width: 360px; }
.tray > div { display: grid; place-items: center; }
.t40 { width: 40px; } .t42 { width: 42px; } .t43 { width: 43px; } .t37 { width: 37px; } .t46 { width: 46px; }
.tray > .clock { width: 88px; align-content: center; font-size: 14.500px; line-height: 23px; letter-spacing: -.18px; }
.tray > .peek { width: 6px; margin-left: auto; border-left: 1px solid #9c7ba0; }
```
